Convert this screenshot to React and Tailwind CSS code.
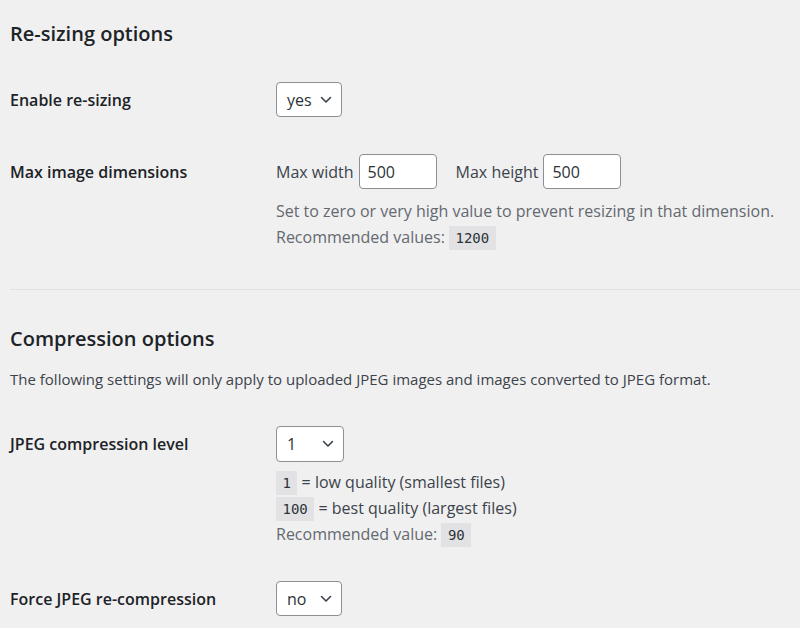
import React from "react";

const font = { fontFamily: "'Open Sans', 'Noto Sans', sans-serif" };

const Chevron = () => (
  <svg width="12" height="8" viewBox="0 0 12 8" fill="none" className="text-[#3c434a]">
    <path d="M1.5 1.5 6 6l4.5-4.5" stroke="currentColor" strokeWidth="1.6" strokeLinecap="round" strokeLinejoin="round" />
  </svg>
);

const Select = ({ value, width }) => (
  <div
    className={`flex h-[35px] items-center justify-between rounded-[4px] border border-[#8c8f94] bg-white pl-[10px] pr-[9px] text-[16px] text-[#2c3338] ${width}`}
  >
    <span>{value}</span>
    <Chevron />
  </div>
);

const Code = ({ children }) => (
  <code className="bg-[#e2e2e4] px-[6.5px] py-[4px] font-['DejaVu_Sans_Mono','Liberation_Mono',monospace] text-[14px] text-[#2c3338]">
    {children}
  </code>
);

const Row = ({ label, children, className = "" }) => (
  <div className={`flex items-start ${className}`}>
    <div className="flex h-[35px] w-[266px] shrink-0 items-center text-[16px] font-semibold text-[#1d2327]">
      {label}
    </div>
    <div className="flex-1">{children}</div>
  </div>
);

export default function App() {
  return (
    <div style={font} className="h-[628px] w-[800px] overflow-hidden bg-[#f0f0f1] pl-[10px]">
      <h2 className="pt-[20px] text-[20px] leading-[28px] font-semibold text-[#1d2327]">Re-sizing options</h2>

      <Row label="Enable re-sizing" className="mt-[34px]">
        <Select value="yes" width="w-[66px]" />
      </Row>

      <Row label="Max image dimensions" className="mt-[37px]">
        <div className="flex items-center text-[16px] text-[#3c434a]">
          <span className="mr-[5px]">Max width</span>
          <div className="flex h-[35px] w-[78px] items-center rounded-[4px] border border-[#8c8f94] bg-white pl-[8px] text-[#2c3338]">500</div>
          <span className="ml-[19px] mr-[5px]">Max height</span>
          <div className="flex h-[35px] w-[78px] items-center rounded-[4px] border border-[#8c8f94] bg-white pl-[8px] text-[#2c3338]">500</div>
        </div>
        <div className="mt-[9px] text-[16px] leading-[26px] text-[#646970]">
          <p>Set to zero or very high value to prevent resizing in that dimension.</p>
          <p>
            Recommended values: <Code>1200</Code>
          </p>
        </div>
      </Row>

      <div className="mt-[38px] h-px bg-[#e3e3e5]" />

      <h2 className="mt-[35px] text-[20px] leading-[28px] font-semibold text-[#1d2327]">Compression options</h2>
      <p className="mt-[14px] text-[15px] leading-[24px] text-[#3c434a]">
        The following settings will only apply to uploaded JPEG images and images converted to JPEG format.
      </p>

      <Row label="JPEG compression level" className="mt-[35px]">
        <Select value="1" width="w-[68px] h-[36px]" />
        <div className="mt-[8px] text-[16px] leading-[25px] text-[#646970]">
          <p className="text-[#3c434a]">
            <Code>1</Code> = low quality (smallest files)
          </p>
          <p className="text-[#3c434a]">
            <Code>100</Code> = best quality (largest files)
          </p>
          <p>
            Recommended value: <Code>90</Code>
          </p>
        </div>
      </Row>

      <Row label="Force JPEG re-compression" className="mt-[33px]">
        <Select value="no" width="w-[66px]" />
      </Row>
    </div>
  );
}
